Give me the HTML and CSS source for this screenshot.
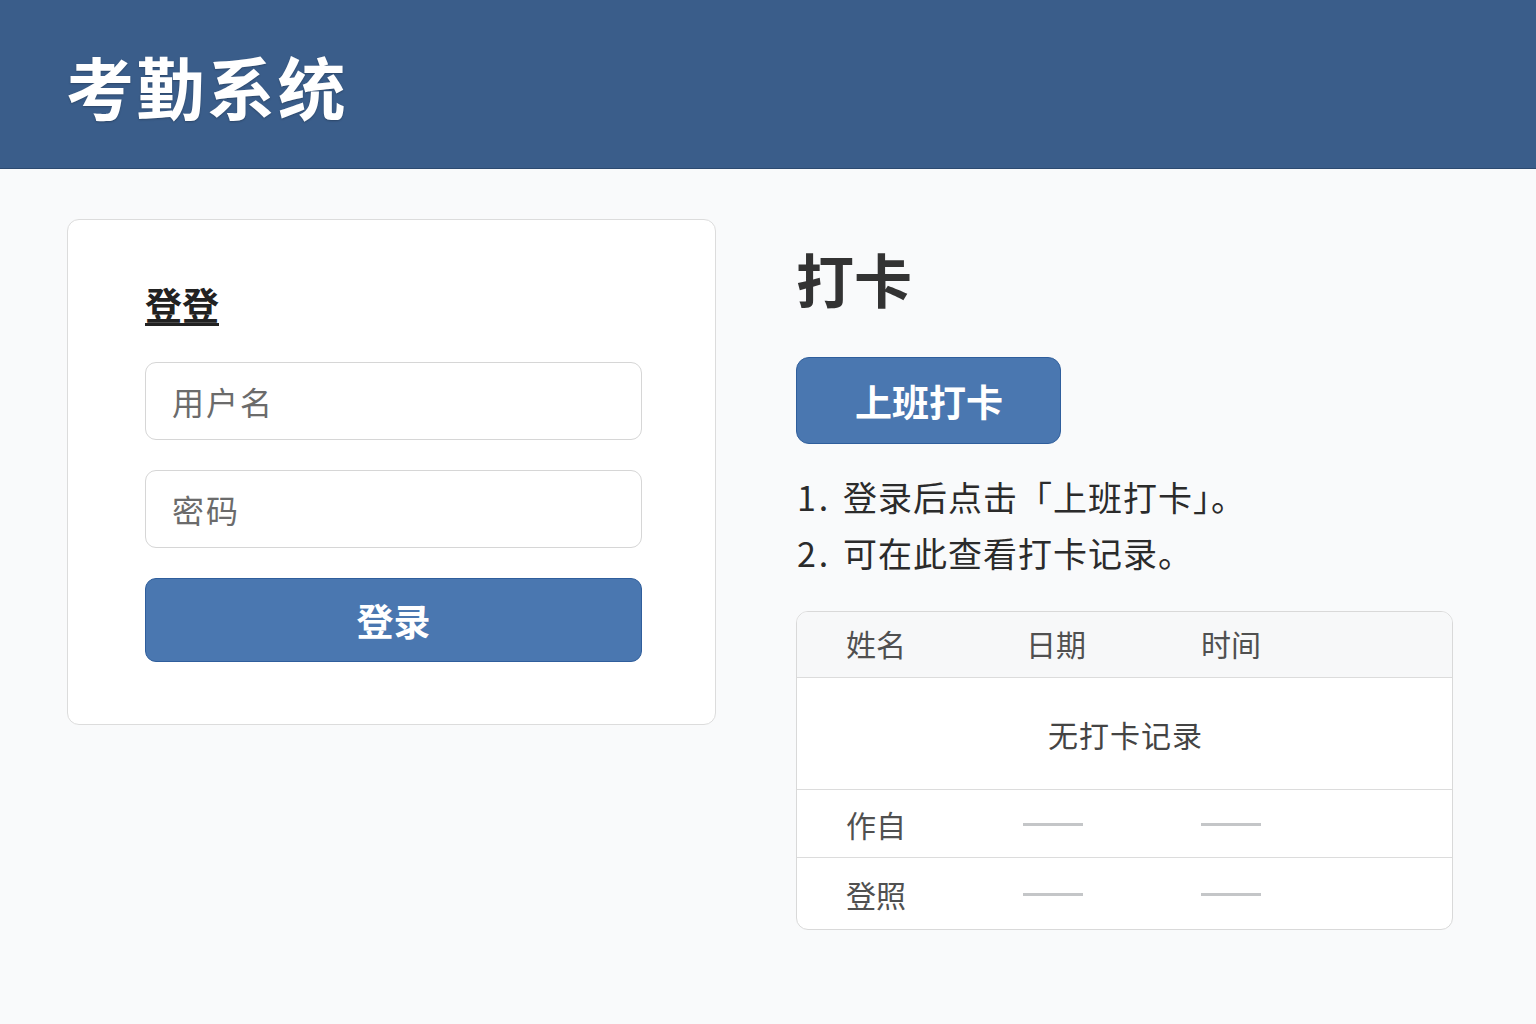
FILE: index.html
```html
<!DOCTYPE html>
<html lang="zh-CN">
<head>
<meta charset="utf-8">
<title>考勤系统</title>
<link rel="stylesheet" href="styles.css">
</head>
<body>
<header class="topbar">
  <h1 class="brand">考勤系统</h1>
</header>
<main class="layout">
  <section class="login-card">
    <h2 class="login-title">登登</h2>
    <input class="field" type="text" placeholder="用户名">
    <input class="field" type="password" placeholder="密码">
    <button class="btn btn-block">登录</button>
  </section>
  <section class="punch">
    <h2 class="punch-title">打卡</h2>
    <button class="btn btn-punch">上班打卡</button>
    <ol class="steps">
      <li><span class="num">1.</span>登录后点击「上班打卡」。</li>
      <li><span class="num">2.</span>可在此查看打卡记录。</li>
    </ol>
    <div class="records">
      <div class="row head">
        <span>姓名</span><span>日期</span><span>时间</span>
      </div>
      <div class="empty">无打卡记录</div>
      <div class="row">
        <span>作自</span><span class="dash"></span><span class="dash"></span>
      </div>
      <div class="row last">
        <span>登照</span><span class="dash"></span><span class="dash"></span>
      </div>
    </div>
  </section>
</main>
</body>
</html>
```
FILE: styles.css
```css
* { box-sizing: border-box; }
html, body { margin: 0; padding: 0; }
body {
  background: #f9fafb;
  font-family: "Noto Sans CJK SC", "Noto Sans", sans-serif;
  color: #333;
  width: 1536px;
  height: 1024px;
  overflow: hidden;
}
.topbar {
  height: 169px;
  background: #3a5d8a;
  border-bottom: 1px solid #2c4a70;
  display: flex;
  align-items: center;
  padding-left: 66px;
}
.brand {
  margin: 0;
  color: #fff;
  font-size: 68px;
  font-weight: 700;
  letter-spacing: 2.5px;
  line-height: 1;
  padding-top: 4px;
  text-shadow: 0 1px 2px rgba(0,0,0,0.25);
}
.layout {
  display: grid;
  grid-template-columns: 649px 657px;
  column-gap: 80px;
  padding: 50px 0 0 67px;
  align-items: start;
}
.login-card {
  background: #fff;
  border: 1px solid #dcdcdc;
  border-radius: 12px;
  padding: 62px 73px 62px 77px;
  display: flex;
  flex-direction: column;
}
.login-title {
  margin: 0 0 36px;
  font-size: 37px;
  font-weight: 700;
  line-height: 44px;
  color: #222;
  text-decoration: underline;
  text-decoration-thickness: 3px;
  text-underline-offset: 3px;
  align-self: flex-start;
}
.field {
  height: 78px;
  border: 1px solid #d6d6d6;
  border-radius: 11px;
  background: #fff;
  padding: 0 26px;
  font-family: inherit;
  font-size: 32px;
  letter-spacing: 2px;
  color: #333;
  margin-bottom: 30px;
  outline: none;
}
.field::placeholder { color: #6b6b6b; }
.btn {
  font-family: inherit;
  background: #4a77b0;
  color: #fff;
  border: 1px solid #2f5e9c;
  font-weight: 700;
  font-size: 37px;
  cursor: pointer;
}
.btn-block {
  height: 84px;
  border-radius: 11px;
}
.punch {
  display: flex;
  flex-direction: column;
  align-items: flex-start;
  padding-top: 24px;
}
.punch-title {
  margin: 0 0 44px;
  font-size: 58px;
  line-height: 70px;
  font-weight: 700;
  color: #333;
}
.btn-punch {
  width: 265px;
  height: 87px;
  border-radius: 13px;
  padding: 0 0 0 1px;
}
.steps {
  list-style: none;
  margin: 25px 0 0;
  padding: 0;
  font-size: 34px;
  line-height: 56px;
  color: #2b2b2b;
  letter-spacing: 1px;
}
.steps li { padding-left: 1px; }
.num {
  display: inline-block;
  width: 46px;
  letter-spacing: 3px;
}
.records {
  align-self: stretch;
  margin-top: 30px;
  background: #fff;
  border: 1px solid #d9d9d9;
  border-radius: 12px;
  overflow: hidden;
  font-size: 30px;
  color: #505050;
}
.row {
  display: grid;
  grid-template-columns: 177px 178px 1fr;
  padding-left: 49px;
  align-items: center;
  height: 68px;
  border-bottom: 1px solid #dcdcdc;
}
.row.head {
  height: 66px;
  background: #f7f8f9;
  padding-bottom: 3px;
}
.row.head span:nth-child(2) { padding-left: 3px; }
.row.last { border-bottom: 0; height: 71px; }
.empty {
  height: 112px;
  display: flex;
  align-items: center;
  justify-content: center;
  padding-left: 2px;
  border-bottom: 1px solid #dcdcdc;
  color: #444;
  letter-spacing: 1px;
}
.dash {
  display: block;
  width: 60px;
  height: 3px;
  background: #c4c6c8;
  margin-top: 2px;
}
```
